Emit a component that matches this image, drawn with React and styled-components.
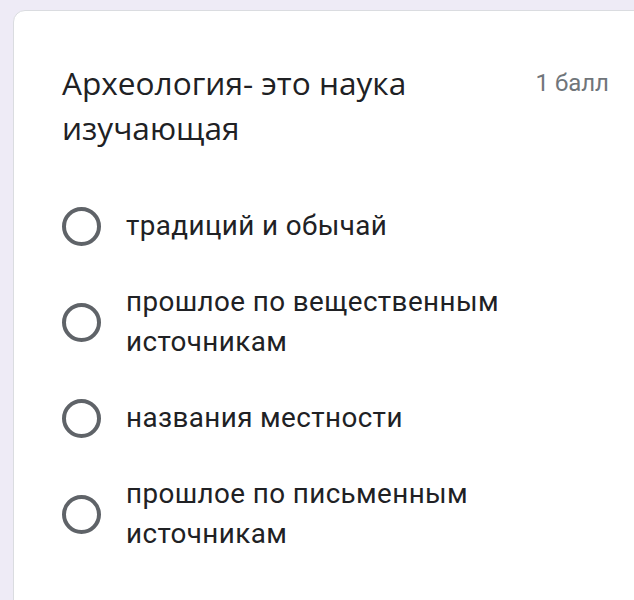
import React from "react";
import styled, { createGlobalStyle } from "styled-components";

const Global = createGlobalStyle`
  html, body { margin: 0; padding: 0; }
  body {
    background: #eeebf6;
    overflow: hidden;
    width: 634px;
    height: 600px;
  }
`;

const Page = styled.div`
  padding: 10px 0 0 13px;
`;

const Card = styled.div`
  box-sizing: border-box;
  width: 651px;
  min-height: 640px;
  background: #fff;
  border: 1px solid #dadce0;
  border-radius: 12px;
  padding: 49px 54px 40px 48px;
  display: flex;
  flex-direction: column;
  gap: 56px;
`;

const Header = styled.div`
  display: flex;
  justify-content: space-between;
  align-items: flex-start;
  gap: 24px;
`;

const Title = styled.div`
  font-family: "Open Sans", "Noto Sans", sans-serif;
  font-size: 31.6px;
  line-height: 45px;
  color: #202124;
  max-width: 420px;
`;

const Points = styled.div`
  font-family: Roboto, "Liberation Sans", sans-serif;
  font-size: 24px;
  line-height: 47px;
  color: #70757a;
  white-space: nowrap;
`;

const Options = styled.div`
  display: flex;
  flex-direction: column;
  gap: 36px;
`;

const Option = styled.label`
  display: flex;
  align-items: center;
  gap: 25px;
`;

const Radio = styled.span`
  box-sizing: border-box;
  flex: none;
  width: 39px;
  height: 39px;
  border-radius: 50%;
  border: 4px solid #5f6368;
`;

const OptionText = styled.span`
  font-family: Roboto, "Liberation Sans", sans-serif;
  font-size: 27.8px;
  line-height: 40px;
  letter-spacing: 0.4px;
  color: #202124;
  max-width: 420px;
`;

const options = [
  "традиций и обычай",
  "прошлое по вещественным источникам",
  "названия местности",
  "прошлое по письменным источникам",
];

export default function App() {
  return (
    <>
      <Global />
      <Page>
        <Card>
          <Header>
            <Title>Археология- это наука изучающая</Title>
            <Points>1 балл</Points>
          </Header>
          <Options>
            {options.map((o) => (
              <Option key={o}>
                <Radio />
                <OptionText>{o}</OptionText>
              </Option>
            ))}
          </Options>
        </Card>
      </Page>
    </>
  );
}
